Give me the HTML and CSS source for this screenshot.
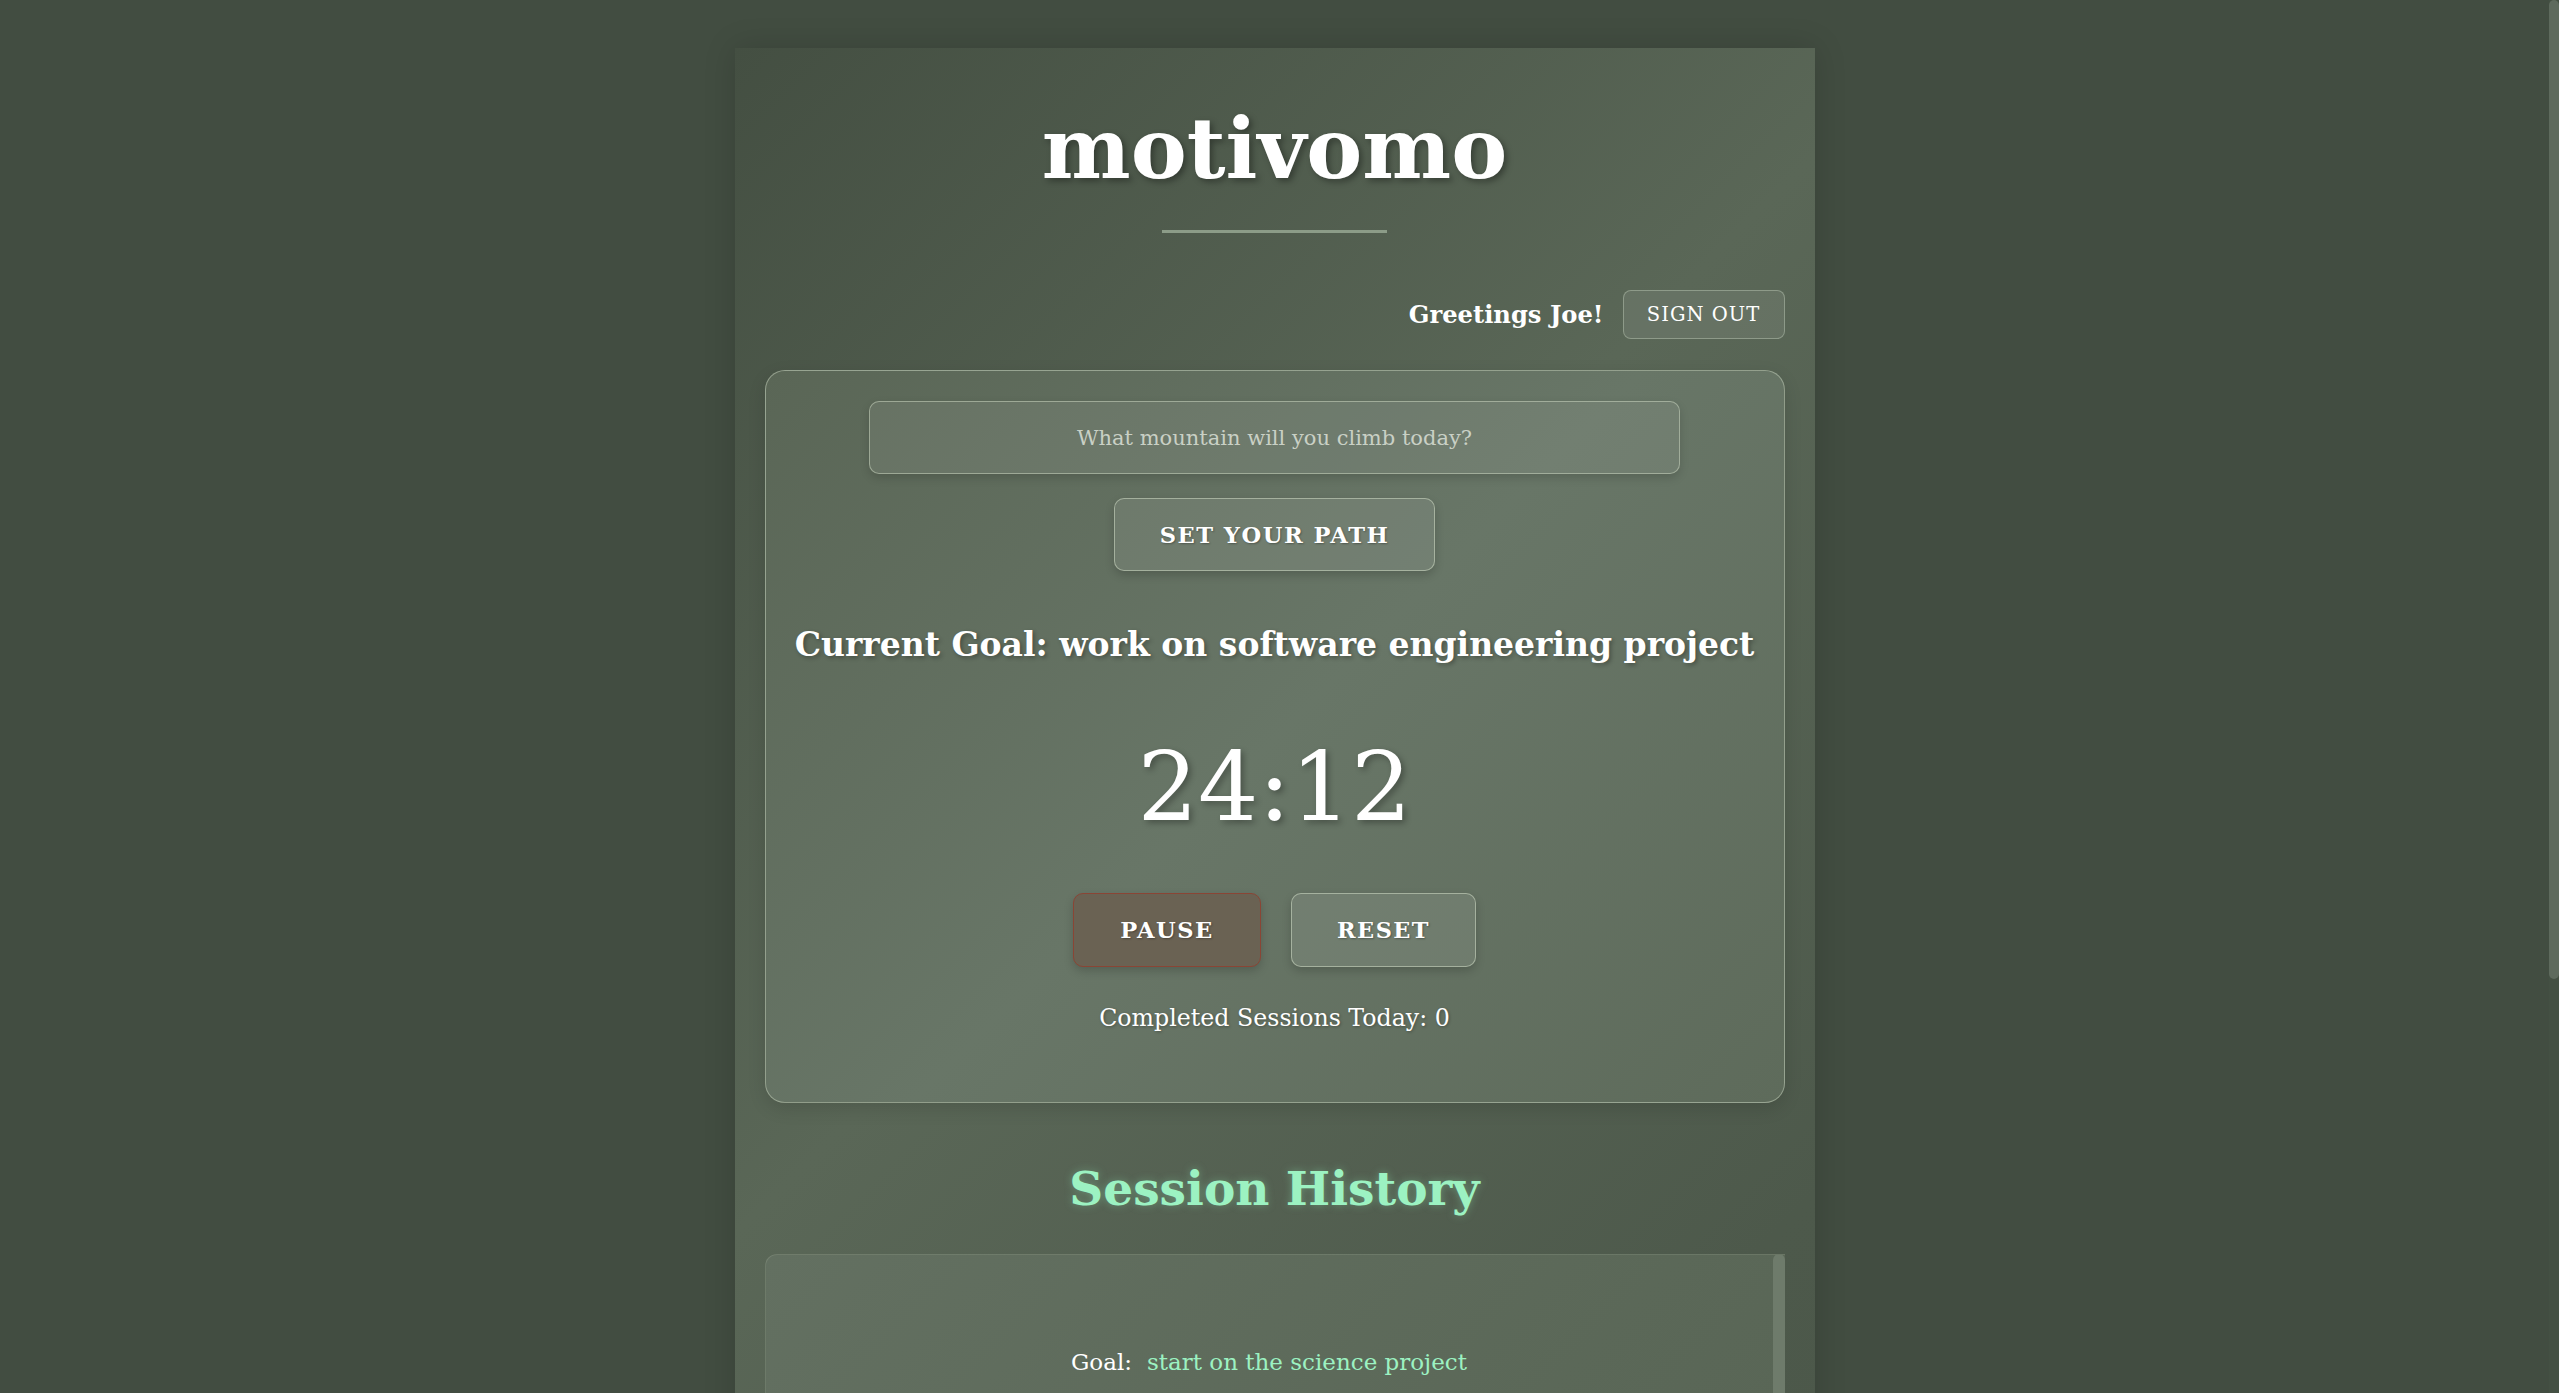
FILE: index.html
```html
<!DOCTYPE html>
<html lang="en">
<head>
<meta charset="utf-8">
<title>motivomo</title>
<link rel="stylesheet" href="styles.css">
</head>
<body>
<div class="viewport">
  <div class="app">
    <header class="header">
      <h1 class="logo">motivomo</h1>
      <div class="logo-rule"></div>
    </header>
    <div class="user-bar">
      <span class="greeting">Greetings Joe!</span>
      <button class="btn-signout">Sign Out</button>
    </div>
    <section class="card">
      <input class="goal-input" type="text" placeholder="What mountain will you climb today?">
      <button class="btn btn-path">Set Your Path</button>
      <h2 class="current-goal">Current Goal: work on software engineering project</h2>
      <div class="timer">24:12</div>
      <div class="controls">
        <button class="btn btn-pause">Pause</button>
        <button class="btn btn-reset">Reset</button>
      </div>
      <p class="completed">Completed Sessions Today: 0</p>
    </section>
    <h2 class="history-title">Session History</h2>
    <div class="history">
      <div class="history-list">
        <div class="history-item">
          <p class="history-line"><span class="label">Goal:</span><span class="value">start on the science project</span></p>
          <p class="history-line"><span class="label">Duration:</span><span class="value">25 minutes</span></p>
          <p class="history-line"><span class="label">Completed:</span><span class="value">earlier today</span></p>
        </div>
        <div class="history-item">
          <p class="history-line"><span class="label">Goal:</span><span class="value">read two chapters</span></p>
          <p class="history-line"><span class="label">Duration:</span><span class="value">25 minutes</span></p>
        </div>
      </div>
      <div class="history-scroll"><div class="history-thumb"></div></div>
    </div>
  </div>
</div>
<div class="page-scroll"><div class="page-thumb"></div></div>
</body>
</html>
```
FILE: styles.css
```css
html, body {
  height: 100%;
}
body {
  margin: 0;
  display: flex;
  overflow: hidden;
  background: #424d41;
  font-family: "DejaVu Serif", Georgia, serif;
  color: #ffffff;
}
.viewport {
  flex: 1;
  min-width: 0;
  height: 100%;
  overflow: hidden;
  padding-top: 48px;
  box-sizing: border-box;
}
.page-scroll {
  width: 10px;
  height: 100%;
  background: #445043;
  flex-shrink: 0;
}
.page-thumb {
  height: 979px;
  background: #5e6a5d;
  border-radius: 5px;
}
.app {
  width: 1080px;
  margin: 0 auto;
  box-sizing: border-box;
  padding: 60px 30px 30px;
  background: linear-gradient(135deg, #444f42 0%, #5a6757 40%, #4d594b 75%, #4a5648 100%);
  box-shadow: 0 0 30px rgba(0, 0, 0, 0.15);
}
.header {
  display: flex;
  flex-direction: column;
  align-items: center;
}
.logo {
  margin: 0;
  font-size: 84px;
  line-height: 82px;
  font-weight: bold;
  text-shadow: 3px 3px 6px rgba(0, 0, 0, 0.35);
}
.logo-rule {
  width: 225px;
  height: 3px;
  margin-top: 40px;
  background: #8c9c88;
}
.user-bar {
  display: flex;
  justify-content: flex-end;
  align-items: center;
  gap: 19px;
  margin-top: 57px;
}
.greeting {
  font-size: 24.2px;
  font-weight: bold;
}
.btn-signout {
  width: 162px;
  height: 49px;
  font-family: inherit;
  font-size: 19.5px;
  letter-spacing: 1px;
  text-transform: uppercase;
  color: #ffffff;
  background: rgba(255, 255, 255, 0.08);
  border: 1px solid rgba(190, 205, 185, 0.45);
  border-radius: 8px;
}
.card {
  margin-top: 31px;
  padding: 30px;
  border: 1px solid rgba(200, 212, 190, 0.5);
  border-radius: 20px;
  background: linear-gradient(135deg, #5a6656 0%, #687667 50%, #5e6b5b 100%);
  display: flex;
  flex-direction: column;
  align-items: center;
  box-shadow: 0 6px 18px rgba(0, 0, 0, 0.12);
}
.goal-input {
  width: 811px;
  height: 73px;
  box-sizing: border-box;
  font-family: inherit;
  font-size: 21px;
  text-align: center;
  color: #ffffff;
  background: rgba(255, 255, 255, 0.07);
  border: 1px solid rgba(200, 212, 190, 0.55);
  border-radius: 10px;
  box-shadow: 0 4px 10px rgba(0, 0, 0, 0.15);
}
.goal-input::placeholder {
  color: #c9d0c5;
}
.btn {
  height: 74px;
  font-family: inherit;
  font-weight: bold;
  text-transform: uppercase;
  letter-spacing: 1.5px;
  color: #ffffff;
  border-radius: 10px;
  box-shadow: 0 4px 10px rgba(0, 0, 0, 0.18);
  text-shadow: 1px 1px 2px rgba(0, 0, 0, 0.3);
}
.btn-path {
  margin-top: 24px;
  width: 321px;
  height: 73px;
  font-size: 22.6px;
  background: rgba(255, 255, 255, 0.08);
  border: 1px solid rgba(200, 212, 190, 0.6);
}
.current-goal {
  margin: 55px 0 0;
  font-size: 33px;
  line-height: 37px;
  font-weight: bold;
  white-space: nowrap;
  text-shadow: 2px 2px 4px rgba(0, 0, 0, 0.3);
}
.timer {
  margin-top: 78px;
  font-size: 95px;
  line-height: 93px;
  text-shadow: 3px 3px 6px rgba(0, 0, 0, 0.3);
}
.controls {
  display: flex;
  gap: 30px;
  margin-top: 59px;
}
.btn-pause {
  width: 188px;
  font-size: 22.6px;
  background: #6a6253;
  border: 1px solid #8a4535;
}
.btn-reset {
  width: 185px;
  font-size: 22.4px;
  background: rgba(255, 255, 255, 0.08);
  border: 1px solid rgba(200, 212, 190, 0.6);
}
.completed {
  margin: 38px 0 41px;
  font-size: 23.7px;
  line-height: 26px;
  text-shadow: 1px 1px 3px rgba(0, 0, 0, 0.3);
}
.history-title {
  margin: 62px 0 0;
  text-align: center;
  font-size: 47px;
  line-height: 48px;
  font-weight: bold;
  color: #9cf2c2;
  text-shadow: 0 0 8px rgba(150, 240, 190, 0.35);
}
.history {
  display: flex;
  margin-top: 41px;
  height: 650px;
  overflow: hidden;
  border: 1px solid rgba(200, 212, 190, 0.18);
  border-right: 0;
  border-radius: 12px 0 0 12px;
  background: linear-gradient(135deg, #637061 0%, #5b6858 55%, #556252 100%);
}
.history-list {
  flex: 1;
  min-width: 0;
}
.history-scroll {
  width: 12px;
  flex-shrink: 0;
  margin-top: -1px;
}
.history-thumb {
  height: 560px;
  background: #6e7b6b;
  border-radius: 6px;
}
.history-item {
  padding: 92px 30px 40px;
  text-align: center;
  min-height: 300px;
}
.history-line {
  margin: 0 0 24px;
  font-size: 23px;
  line-height: 30px;
}
.label {
  color: #ffffff;
}
.value {
  color: #9cf2c2;
  margin-left: 15px;
}
```
